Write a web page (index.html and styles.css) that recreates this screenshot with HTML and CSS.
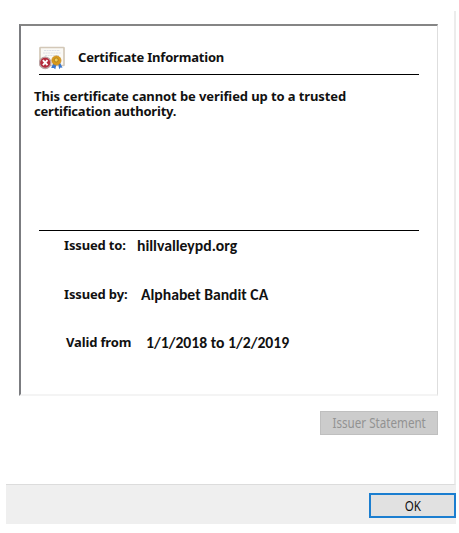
FILE: index.html
```
<!DOCTYPE html>
<html lang="en">
<head>
<meta charset="utf-8">
<title>Certificate</title>
<link rel="stylesheet" href="styles.css">
</head>
<body>
<main class="dialog">
  <section class="page">
    <div class="panel">
      <header class="heading">
        <svg class="cert-icon" viewBox="0 0 26 24" aria-hidden="true">
          <rect x="1" y="1.5" width="24" height="18" rx=".5" fill="#faf9f5" stroke="#d3c8b8" stroke-width="1.7"/>
          <path d="M5 4.5h16M4 7h18M6 9.5h14" stroke="#d5d8e2" stroke-width=".8" stroke-dasharray="2 .6"/>
          <path d="M14.8 16l-2.6 6 2.5 0 1.6 1.3 1.4-6zM19 17l1.2 6.2 1.3-1.6 2 .1-2.8-5.7z" fill="#3b78cf"/>
          <circle cx="17.4" cy="14.5" r="4.6" fill="#d99a1c" stroke="#c98b20" stroke-width=".8"/>
          <circle cx="17.2" cy="14" r="2" fill="#f2cc55" stroke="#9c721c" stroke-width=".7"/>
          <circle cx="6.2" cy="16.8" r="5.7" fill="#b42b3c" stroke="#bba3a5" stroke-width="1.3"/>
          <path d="M3.9 14.2l4.6 5M8.5 14.2l-4.6 5" stroke="#fff" stroke-width="1.9"/>
        </svg>
        <h1 class="title">Certificate Information</h1>
      </header>
      <p class="message"><span class="line-one">This certificate cannot be verified up to a trusted</span> <span class="line-two">certification authority.</span></p>
      <div class="details">
        <div class="row"><span class="label to">Issued to:</span><span class="value host">hillvalleypd.org</span></div>
        <div class="row"><span class="label by">Issued by:</span><span class="value issuer">Alphabet Bandit CA</span></div>
        <div class="row valid"><span class="label from">Valid from</span><span class="value dates">1/1/2018 to 1/2/2019</span></div>
      </div>
    </div>
    <button class="statement" disabled><span class="caption">Issuer Statement</span></button>
  </section>
  <footer class="footer"><button class="ok"><span class="caption">OK</span></button></footer>
</main>
</body>
</html>
```
FILE: styles.css
```
* { box-sizing: border-box; }
body { margin: 0; background: #fff; color: #111; font: 700 13px/15px "Noto Sans", sans-serif; }
h1, p { margin: 0; font: inherit; }
button { font: 400 14px/16px "Noto Sans", sans-serif; padding: 0; border-radius: 0; white-space: nowrap; }
.dialog { width: 450px; margin: 11px 0 0 6px; }
.page { height: 474px; padding: 13px 16px 0 13px; border-right: 2px solid #ececec; border-bottom: 1px solid #dcdcdc; display: flex; flex-direction: column; align-items: flex-end; }
.panel { width: 419px; height: 372px; border: 2px solid #7b7c80; border-top-color: #858585; border-right: 1px solid #dedede; border-bottom: 2px solid #f4f4f4; display: flex; flex-direction: column; }
.heading { height: 49px; margin: 0 18px 0 18px; border-bottom: 1px solid #000; padding-top: 20px; display: flex; gap: 13px; }
.cert-icon { width: 26px; height: 24px; flex: none; }
.title { padding-top: 4px; letter-spacing: -.2px; }
.message { height: 155px; padding: 14px 0 0 13px; white-space: nowrap; letter-spacing: -.1px; }
.line-one, .line-two { display: block; }
.line-two { letter-spacing: -.2px; }
.details { margin: 0 18px; border-top: 1px solid #000; padding: 7px 0 0 25px; }
.row { display: flex; height: 48.5px; white-space: nowrap; }
.label { width: 62px; margin-right: 11px; letter-spacing: -.15px; }
.label.by { width: 64px; margin-right: 13px; }
.label.from { width: 66px; margin: 0 14px 0 2px; }
.value { font: 700 15.7px/16px Carlito, Lato, sans-serif; }
.caption { display: inline-block; transform: scaleX(.83); }
.statement { width: 118px; height: 24px; margin-top: 15px; border: 1px solid #bfbfbf; background: #ccc; color: #929292; display: flex; align-items: center; justify-content: center; }
.footer { height: 39px; background: #efefef; display: flex; justify-content: flex-end; padding-top: 8px; }
.ok { width: 87px; height: 25px; border: 2px solid #1b7ed0; background: #e1e1e1; color: #111; }
```
